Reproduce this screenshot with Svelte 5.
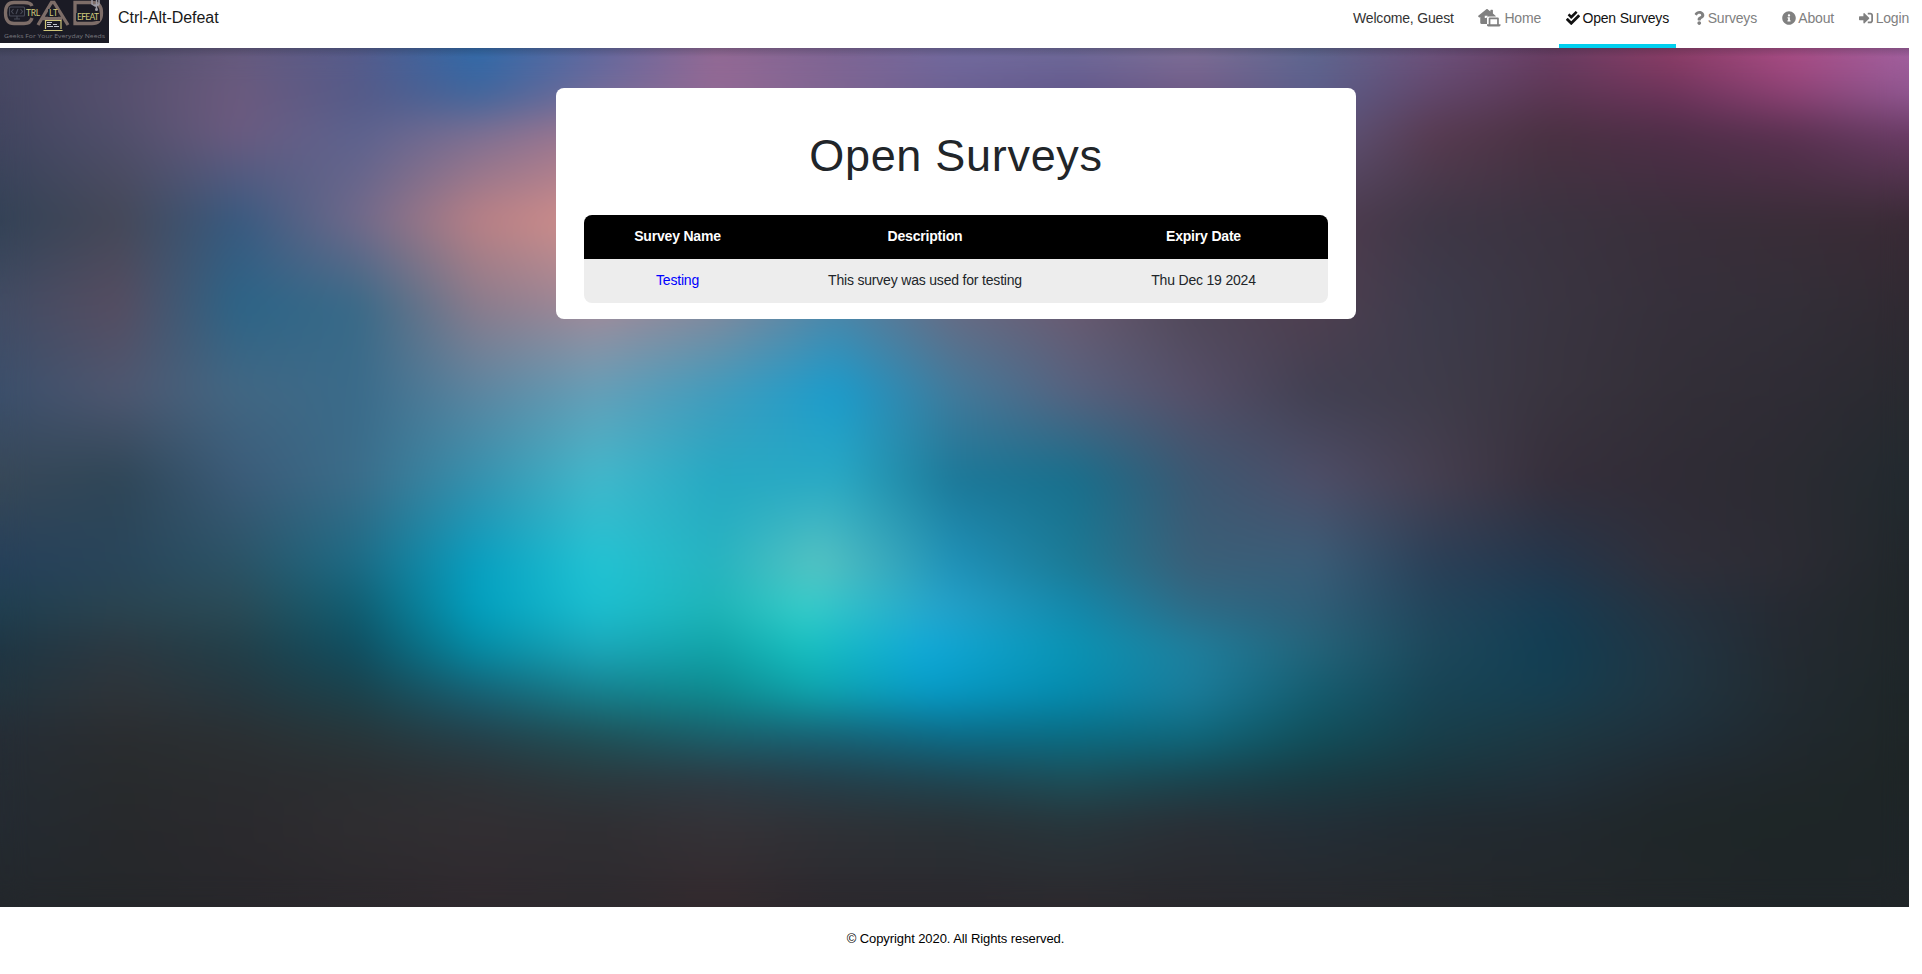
<script>
  const navItems = [
    { label: 'Home', icon: 'home', width: 63 },
    { label: 'Open Surveys', icon: 'checks', width: 103, active: true },
    { label: 'Surveys', icon: 'question', width: 63 },
    { label: 'About', icon: 'info', width: 52 },
    { label: 'Login', icon: 'login', width: 50 }
  ];

  const icons = {
    home: {
      box: '0 0 640 512',
      w: 22.5,
      h: 18,
      d: 'M238 6c11-8 25-8 36 0l78 64V36c0-9 7-16 16-16h40c9 0 16 7 16 16v94l74 62c9 8 8 16 4 20H304c-27 0-48 21-48 48v164H96c-18 0-32-14-32-32V228l-16 12c-7 6-16 5-22-2L6 214c-6-7-5-16 2-22zM192 192v64h48c6-18 16-28 32-36v-28zM304 432V264c0-13 11-24 24-24h240c13 0 24 11 24 24v168h48v30c0 20-16 34-34 34H290c-18 0-34-14-34-34v-30zM352 288v144h192V288z'
    },
    checks: {
      box: '0 0 512 512',
      w: 14,
      h: 14,
      d: 'M505 174.8l-39.6-39.6c-9.4-9.4-24.6-9.4-33.9 0L192 374.7 80.6 263.2c-9.4-9.4-24.6-9.4-33.9 0L7 302.9c-9.4 9.4-9.4 24.6 0 34L175 505c9.4 9.4 24.6 9.4 33.9 0l296-296.2c9.4-9.5 9.4-24.7.1-34zm-324.3 106c6.2 6.3 16.4 6.3 22.6 0l208-208.2c6.2-6.3 6.2-16.4 0-22.6L366.1 4.7c-6.2-6.3-16.4-6.3-22.6 0L192 156.2l-55.4-55.5c-6.2-6.3-16.4-6.3-22.6 0L68.7 146c-6.2 6.3-6.2 16.4 0 22.6l112 112.2z'
    },
    question: {
      box: '0 0 384 512',
      w: 10.5,
      h: 14,
      d: 'M202.021 0C122.202 0 70.503 32.703 29.914 91.026c-7.363 10.58-5.093 25.086 5.178 32.874l43.138 32.709c10.373 7.865 25.132 6.026 33.253-4.148 25.049-31.381 43.63-49.449 82.757-49.449 30.764 0 68.816 19.799 68.816 49.631 0 22.552-18.617 34.134-48.993 51.164-35.423 19.86-82.299 44.576-82.299 106.405V320c0 13.255 10.745 24 24 24h72.471c13.255 0 24-10.745 24-24v-5.773c0-42.86 125.268-44.645 125.268-160.627C377.504 66.256 286.902 0 202.021 0zM192 373.459c-38.196 0-69.271 31.075-69.271 69.271 0 38.195 31.075 69.27 69.271 69.27s69.271-31.075 69.271-69.271-31.075-69.27-69.271-69.27z'
    },
    info: {
      box: '0 0 512 512',
      w: 14,
      h: 14,
      d: 'M256 8C119.043 8 8 119.083 8 256c0 136.997 111.043 248 248 248s248-111.003 248-248C504 119.083 392.957 8 256 8zm0 110c23.196 0 42 18.804 42 42s-18.804 42-42 42-42-18.804-42-42 18.804-42 42-42zm56 254c0 6.627-5.373 12-12 12h-88c-6.627 0-12-5.373-12-12v-24c0-6.627 5.373-12 12-12h12v-64h-12c-6.627 0-12-5.373-12-12v-24c0-6.627 5.373-12 12-12h64c6.627 0 12 5.373 12 12v100h12c6.627 0 12 5.373 12 12v24z'
    },
    login: {
      box: '0 0 512 512',
      w: 14,
      h: 14,
      d: 'M416 448h-84c-6.6 0-12-5.4-12-12v-40c0-6.6 5.4-12 12-12h84c17.7 0 32-14.3 32-32V160c0-17.7-14.3-32-32-32h-84c-6.6 0-12-5.4-12-12V76c0-6.6 5.4-12 12-12h84c53 0 96 43 96 96v192c0 53-43 96-96 96zm-47-201L201 79c-15-15-41-4.5-41 17v96H24c-13.3 0-24 10.7-24 24v96c0 13.3 10.7 24 24 24h136v96c0 21.5 26 32 41 17l168-168c9.3-9.4 9.3-24.6 0-34z'
    }
  };

  const surveys = [
    { name: 'Testing', description: 'This survey was used for testing', expiry: 'Thu Dec 19 2024' }
  ];

  // Colour mesh of the backdrop: each row is a horizontal gradient whose stops are
  // evenly spaced unless moved, and neighbouring rows are cross-faded vertically.
  const mesh = [
    [0, '484a64 524f6c 655a7e 565c8c 2f6bab 5f689f 936994 7e6594 736ca0 716d9b 7f7199 5f6890 6f547f 6c3f66 913f69 ae4f88 a562a1'],
    [47, '454661 57506e 6b5a7e 555a88 40659c 706b99 936994 7f6592 6a5f91 61568a 705a85 5b5e8b 60466a 5b3653 6b335a 8b4173 8f5790'],
    [86, '41455f 504f6b 6b5b80 5c628e 7d6f92 a2778f 8c6a90 76638d 6b5a86 5b5785 5d4a6b 5f587f 583b51 4a3142 4f2e48 5a3151 6b3c66'],
    [172, '334256 454858 385a80 71698a b98085 d4918c 8f8796 6f7494 66668a 5b5785 584a63 513c50 3f3746 3b3340 3a2f3b 3a2d38 3a2b36'],
    [258, '424c64 564d61 2c6487 396a88 8a7b8c a38a99 85889b 4d86a8 696b83 6a5a70 504859 4f3f50 3d3b4b 3a3541 36303b 332f38 302a32'],
    [344, '3b4f6b 4e5770 426783 3a6b8a 5c85a0 659fb8 419cbd 1a9ccc 427a9b 56627f 564f68 424052 3f3c4a 39343f 332f38 2f2c35 292a30'],
    [430, '384858 2f4657 3b5b78 3b6d8a 3691ae 42b8cb 26a9c3 29a9c4 1c7898 186f8c 3c5872 4e4e68 463f50 362f3b 302c36 2b2b32 222a2f'],
    [516, '26405a 29455a 2b5366 1c6b85 089fc0 22c3d3 27b3c0 56c3c2 1f91b8 1c7a95 3a5f78 3a5d78 2b4058 24364b 302f3a 2c2c34 21272b', { 7: 818 }],
    [559, '203f50 2a4450 2a4b57 105e72 02a0bf 1cbfd0 1fb5b8 37cdca 25a3cb 1488ab 2e6b86 305e78 23455b 183c52 26323f 262a32 202729', { 7: 806, 8: 940 }],
    [602, '1f3644 2b3841 223f49 104e60 058aa3 1ba7b9 11a3a8 17bfc0 10a9d8 0a94b4 1e7f9d 23647a 1d485b 123e53 213543 242a31 20272a', { 7: 806, 8: 925 }],
    [645, '22343e 2f3439 26373f 1b424c 176073 167f8d 0e8a8f 0ea3ad 079bc6 058bae 1a7c9a 155d70 184455 163e50 203541 222b31 1e2628', { 7: 815, 8: 930 }],
    [688, '262d36 2a2d30 2b3033 28363a 24414b 1f5158 1a5f6b 176377 0c6c88 0a6c83 0f687c 11505c 183f4b 1d3842 1f303b 20292f 1f2627'],
    [732, '252c33 282b2d 2a2c2f 2c2e31 2e3236 2b393e 2d3a43 243f4a 1f4551 1d4e58 1a444e 193b43 1c343c 20303a 21292f 20272a 1e2526'],
    [774, '242b32 27292c 2b2a2e 2f2e31 322f33 302f33 353338 2f3237 2a3237 27363c 2a3037 232f38 222b32 22292f 1f2729 1e2627 1e2528'],
    [859, '23272b 25272a 28272b 2b282c 2f292e 2d2a2e 33292d 2b282d 2b282d 2d292d 29282c 28282c 26282b 23272a 222629 1f2528 202528']
  ].map(([y, colours, moved = {}]) => ({
    y,
    stops: colours.split(' ').map((c, k, all) => ({
      colour: '#' + c,
      at: moved[k] ? moved[k] / 1909 : k / (all.length - 1)
    }))
  }));
</script>

<div class="page">
  <header>
    <svg class="logo" viewBox="0 0 109 43" role="img" aria-label="Ctrl-Alt-Defeat logo">
      <rect width="109" height="43" fill="#1b1b25" />
      <g fill="none" stroke="#7d6d68" stroke-width="3.3">
        <path d="M32 6C31 3 28 2.5 24 2.5H14C8 2.5 5.500 6 5.500 13S8 23.500 14 23.500H24C28 23.500 31 22 32 18" />
        <path d="M38 25L51.500 2.500H54L68 25M43 18.500H62" />
        <path d="M75 2.500H92Q101.500 2.500 101.500 13T92 23.500H75Z" />
      </g>
      <rect x="25" y="9" width="16" height="8" fill="#1b1b25" />
      <rect x="48" y="9" width="10" height="8" fill="#1b1b25" />
      <rect x="76" y="13" width="24" height="8" fill="#1b1b25" />
      <g fill="none" stroke="#484b58" stroke-width="1.1">
        <rect x="9.500" y="7" width="15" height="9" rx="1" />
        <path d="M13.500 9l-2 2.500 2 2.500M20.500 9l2 2.500-2 2.500M18 9l-2 5M17 16v3M14 19h6" />
      </g>
      <g fill="#cfc97c" font-family="Lato" font-size="8.5">
        <text x="26" y="16" textLength="14">TRL</text>
        <text x="49" y="16" textLength="9">LT</text>
        <text x="77" y="20" textLength="22">EFEAT</text>
      </g>
      <path d="M45.500 29V20.500H61V29M43.500 30.500H62.500" fill="none" stroke="#cfc67a" stroke-width="1.2" />
      <path d="M47 22.500h5M47 24.500h4M53 24.500h4M47 26.500h6M54 26.500h5" stroke="#c3c6ce" />
      <path d="M92 0v4l3 2 4-2V0M96.500 0v9M94 5h5" stroke="#9d9ca5" stroke-width="1.5" fill="none" />
      <circle cx="96.500" cy="9.500" r="1.500" fill="#9d9ca5" />
      <text x="4" y="37.500" textLength="101" lengthAdjust="spacingAndGlyphs" font-family="Open Sans" font-size="5.500" fill="#77777d">Geeks For Your Everyday Needs</text>
    </svg>
    <a class="brand" href="#home">Ctrl-Alt-Defeat</a>
    <nav>
      <span class="welcome">Welcome, Guest</span>
      {#each navItems as item}
        {@const icon = icons[item.icon]}
        <a class="item" class:active={item.active} href="#{item.icon}">
          <span class="inner" style="width: {item.width}px">
            <svg class="icon" width={icon.w} height={icon.h} viewBox={icon.box}><path fill-rule="evenodd" d={icon.d} /></svg>
            <span>{item.label}</span>
          </span>
        </a>
      {/each}
    </nav>
  </header>

  <main>
    <svg class="backdrop" viewBox="0 0 1909 859" preserveAspectRatio="none" aria-hidden="true">
      <defs>
        <linearGradient id="fade" x1="0" y1="0" x2="0" y2="1">
          <stop offset="0" stop-color="#000" />
          <stop offset="1" stop-color="#fff" />
        </linearGradient>
        <linearGradient id="shade" x1="0" y1="0" x2="0" y2="1">
          <stop offset="0" stop-color="#141824" stop-opacity="0.22" />
          <stop offset="1" stop-color="#141824" stop-opacity="0" />
        </linearGradient>
        <filter id="soft" x="0" y="0" width="1909" height="859" filterUnits="userSpaceOnUse" color-interpolation-filters="sRGB">
          <feGaussianBlur stdDeviation="14" />
        </filter>
        {#each mesh as row, i}
          <linearGradient id="row{i}" gradientUnits="userSpaceOnUse" x1="0" y1="0" x2="1909" y2="0">
            {#each row.stops as stop}
              <stop offset={stop.at} stop-color={stop.colour} />
            {/each}
          </linearGradient>
          {#if i > 0}
            <mask id="mask{i}" maskUnits="userSpaceOnUse" x="0" y={mesh[i - 1].y} width="1909" height={row.y - mesh[i - 1].y} color-interpolation="sRGB">
              <rect x="0" y={mesh[i - 1].y} width="1909" height={row.y - mesh[i - 1].y} fill="url(#fade)" />
            </mask>
          {/if}
        {/each}
      </defs>
      {#snippet field()}
        {#each mesh as row, i}
          {#if i > 0}
            <rect x="0" y={mesh[i - 1].y} width="1909" height={row.y - mesh[i - 1].y} fill="url(#row{i - 1})" />
            <rect x="0" y={mesh[i - 1].y} width="1909" height={row.y - mesh[i - 1].y} fill="url(#row{i})" mask="url(#mask{i})" />
          {/if}
        {/each}
      {/snippet}
      {@render field()}
      <g filter="url(#soft)">{@render field()}</g>
      <rect width="1909" height="9" fill="url(#shade)" />
    </svg>

    <section class="card">
      <h1>Open Surveys</h1>
      <table>
        <thead>
          <tr><th class="c1">Survey Name</th><th class="c2">Description</th><th class="c3">Expiry Date</th></tr>
        </thead>
        <tbody>
          {#each surveys as survey}
            <tr>
              <td><a href="#survey">{survey.name}</a></td>
              <td>{survey.description}</td>
              <td>{survey.expiry}</td>
            </tr>
          {/each}
        </tbody>
      </table>
    </section>
  </main>

  <footer>© Copyright 2020. All Rights reserved.</footer>
</div>

<style>
  :global(body) {
    margin: 0;
    background: #fff;
    font-family: "Liberation Sans", Arial, sans-serif;
    overflow: hidden;
  }
  .page {
    box-sizing: border-box;
    width: 1909px;
    height: 974px;
    display: flex;
    flex-direction: column;
    color: #212529;
  }
  a {
    text-decoration: none;
    color: inherit;
  }
  header {
    height: 48px;
    flex: none;
    display: flex;
    align-items: flex-start;
  }
  .logo {
    width: 109px;
    height: 43px;
    display: block;
  }
  .brand {
    margin-left: 9px;
    font-size: 16px;
    letter-spacing: -0.05px;
    line-height: 36px;
    color: #191919;
  }
  nav {
    margin-left: auto;
    display: flex;
    gap: 11px;
    font-size: 14px;
    letter-spacing: -0.18px;
    line-height: 37px;
    margin-right: -7px;
  }
  .welcome {
    width: 101px;
    margin-right: 6px;
    white-space: nowrap;
    color: #333;
  }
  .item {
    box-sizing: border-box;
    height: 48px;
    padding: 0 7px;
    color: #808080;
  }
  .item.active {
    color: #111;
    border-bottom: 4px solid #00d0ef;
  }
  .inner {
    display: flex;
    justify-content: space-between;
    align-items: center;
    white-space: nowrap;
    height: 36px;
  }
  .icon {
    flex: none;
    fill: currentColor;
  }
  main {
    flex: none;
    height: 859px;
    display: grid;
    grid-template: 859px / 1909px;
    justify-items: center;
    overflow: hidden;
  }
  .backdrop {
    grid-area: 1 / 1;
    width: 1909px;
    height: 859px;
    display: block;
  }
  .card {
    grid-area: 1 / 1;
    z-index: 1;
    box-sizing: border-box;
    width: 800px;
    height: 231px;
    margin: 40px 0 0 3px;
    padding: 38px 28px 0;
    background: #fff;
    border-radius: 8px;
  }
  h1 {
    margin: 0 0 29px;
    height: 60px;
    line-height: 60px;
    font-size: 45px;
    font-weight: 400;
    letter-spacing: 0.7px;
    text-align: center;
  }
  table {
    width: 744px;
    border-spacing: 0;
    border-radius: 8px;
    overflow: hidden;
    table-layout: fixed;
    font-size: 14px;
    text-align: center;
    letter-spacing: -0.19px;
  }
  th,
  td {
    box-sizing: border-box;
    height: 44px;
    padding: 0 0 2px;
    line-height: 20px;
  }
  th {
    background: #000;
    color: #fff;
  }
  td {
    background: #ededed;
  }
  td a {
    color: #0000ff;
  }
  .c1 {
    width: 187px;
  }
  .c2 {
    width: 308px;
  }
  .c3 {
    width: 249px;
  }
  footer {
    padding: 22px 0 0 2px;
    text-align: center;
    font-size: 13px;
    letter-spacing: -0.08px;
    line-height: 20px;
    color: #000;
  }
</style>
